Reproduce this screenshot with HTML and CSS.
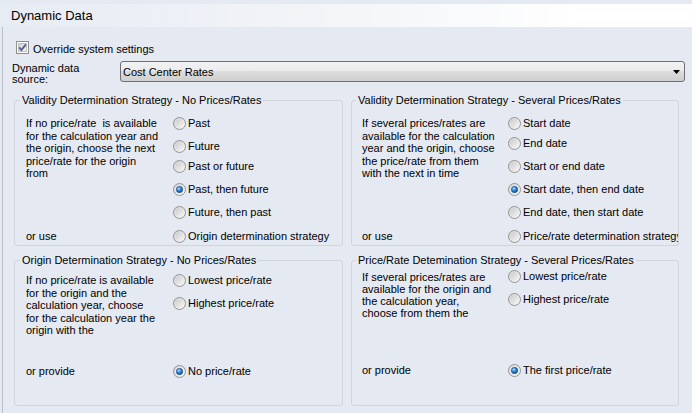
FILE: index.html
```html
<!DOCTYPE html>
<html lang="en">
<head>
<meta charset="utf-8">
<title>Dynamic Data</title>
<link rel="stylesheet" href="styles.css">
</head>
<body>
<svg class="defs" aria-hidden="true">
  <defs>
    <linearGradient id="g-ring" x1="0" y1="0" x2="1" y2="1">
      <stop offset="0" stop-color="#d2d2d2"/>
      <stop offset="1" stop-color="#fafafa"/>
    </linearGradient>
    <linearGradient id="g-inner" x1="0" y1="0" x2="1" y2="1">
      <stop offset="0" stop-color="#cbcbcb"/>
      <stop offset="1" stop-color="#f6f6f6"/>
    </linearGradient>
    <radialGradient id="g-dot" cx="0.4" cy="0.35" r="0.7">
      <stop offset="0" stop-color="#b4e0ff"/>
      <stop offset="0.45" stop-color="#2f88d6"/>
      <stop offset="1" stop-color="#0c4886"/>
    </radialGradient>
    <linearGradient id="g-check" x1="0" y1="0" x2="1" y2="1">
      <stop offset="0" stop-color="#cfcfcf"/>
      <stop offset="1" stop-color="#f7f7f7"/>
    </linearGradient>
    <symbol id="radio-off" viewBox="0 0 13 13">
      <circle cx="6.5" cy="6.5" r="6" fill="url(#g-ring)" stroke="#939393"/>
      <circle cx="6.5" cy="6.5" r="4.3" fill="url(#g-inner)"/>
    </symbol>
    <symbol id="radio-on" viewBox="0 0 13 13">
      <circle cx="6.5" cy="6.5" r="6" fill="url(#g-ring)" stroke="#939393"/>
      <circle cx="6.5" cy="6.5" r="4.3" fill="#f2f2f2"/>
      <circle cx="6.5" cy="6.5" r="3.2" fill="url(#g-dot)" stroke="#1f4a80" stroke-width="0.6"/>
    </symbol>
  </defs>
</svg>

<div class="window">
  <div class="titlebar">Dynamic Data</div>
  <div class="content">
    <div class="check-row">
      <svg class="checkbox" viewBox="0 0 13 13" width="13" height="13">
        <rect x="0.5" y="0.5" width="12" height="12" fill="#ffffff" stroke="#8e8f8f"/>
        <rect x="2.5" y="2.5" width="8" height="8" fill="url(#g-check)" stroke="#c2c2c2"/>
        <path d="M3.2 6.4 L5.4 9.1 L9.9 3.4" fill="none" stroke="#4b5c97" stroke-width="1.7"/>
      </svg>
      <span class="check-text">Override system settings</span>
    </div>

    <div class="source-row">
      <div class="source-label">Dynamic data<br>source:</div>
      <div class="combo">
        <span>Cost Center Rates</span>
        <svg class="combo-arrow" viewBox="0 0 7 4" width="7" height="4"><polygon points="0,0 7,0 3.5,4" fill="#000"/></svg>
      </div>
    </div>

    <div class="groups">
      <fieldset class="group tl">
        <legend>Validity Determination Strategy - No Prices/Rates</legend>
        <div class="group-body">
          <div class="desc">If no price/rate&nbsp; is available<br>for the calculation year and<br>the origin, choose the next<br>price/rate for the origin<br>from</div>
          <div class="radio"><svg><use href="#radio-off"/></svg><span>Past</span></div>
          <div class="radio"><svg><use href="#radio-off"/></svg><span>Future</span></div>
          <div class="radio"><svg><use href="#radio-off"/></svg><span>Past or future</span></div>
          <div class="radio"><svg><use href="#radio-on"/></svg><span>Past, then future</span></div>
          <div class="radio"><svg><use href="#radio-off"/></svg><span>Future, then past</span></div>
          <div class="radio"><svg><use href="#radio-off"/></svg><span>Origin determination strategy</span></div>
          <div class="alt">or use</div>
        </div>
      </fieldset>

      <fieldset class="group right tr">
        <legend>Validity Determination Strategy - Several Prices/Rates</legend>
        <div class="group-body">
          <div class="desc">If several prices/rates are<br>available for the calculation<br>year and the origin, choose<br>the price/rate from them<br>with the next in time</div>
          <div class="radio"><svg><use href="#radio-off"/></svg><span>Start date</span></div>
          <div class="radio"><svg><use href="#radio-off"/></svg><span>End date</span></div>
          <div class="radio"><svg><use href="#radio-off"/></svg><span>Start or end date</span></div>
          <div class="radio"><svg><use href="#radio-on"/></svg><span>Start date, then end date</span></div>
          <div class="radio"><svg><use href="#radio-off"/></svg><span>End date, then start date</span></div>
          <div class="radio"><svg><use href="#radio-off"/></svg><span>Price/rate determination strategy</span></div>
          <div class="alt">or use</div>
        </div>
      </fieldset>

      <fieldset class="group bl">
        <legend>Origin Determination Strategy - No Prices/Rates</legend>
        <div class="group-body">
          <div class="desc">If no price/rate is available<br>for the origin and the<br>calculation year, choose<br>for the calculation year the<br>origin with the</div>
          <div class="radio"><svg><use href="#radio-off"/></svg><span>Lowest price/rate</span></div>
          <div class="radio"><svg><use href="#radio-off"/></svg><span>Highest price/rate</span></div>
          <div class="radio"><svg><use href="#radio-on"/></svg><span>No price/rate</span></div>
          <div class="alt">or provide</div>
        </div>
      </fieldset>

      <fieldset class="group right br">
        <legend>Price/Rate Detemination Strategy - Several Prices/Rates</legend>
        <div class="group-body">
          <div class="desc">If several prices/rates are<br>available for the origin and<br>the calculation year,<br>choose from them the</div>
          <div class="radio"><svg><use href="#radio-off"/></svg><span>Lowest price/rate</span></div>
          <div class="radio"><svg><use href="#radio-off"/></svg><span>Highest price/rate</span></div>
          <div class="radio"><svg><use href="#radio-on"/></svg><span>The first price/rate</span></div>
          <div class="alt">or provide</div>
        </div>
      </fieldset>
    </div>
  </div>
</div>
</body>
</html>
```

FILE: styles.css
```css
html, body {
  margin: 0;
  padding: 0;
}

body {
  width: 692px;
  height: 413px;
  overflow: hidden;
  background: #e4e9f2;
  font-family: "Liberation Sans", Arial, sans-serif;
  font-size: 11px;
  color: #000;
}

.defs {
  display: block;
  width: 0;
  height: 0;
  overflow: hidden;
}

.window {
  padding-top: 4px;
}

.titlebar {
  height: 23px;
  line-height: 23px;
  font-size: 13px;
  padding-left: 11px;
  background: linear-gradient(to right, #e7ebf3 0%, #f2f4f8 45%, #ffffff 85%);
}

.content {
  height: 386px;
  box-sizing: border-box;
  margin-left: 2px;
  border-left: 1px solid #babfc8;
  padding: 14px 0 0 9px;
}

.check-row {
  display: flex;
  align-items: flex-start;
  gap: 4px;
  height: 13px;
  margin-left: 4px;
}

.checkbox {
  flex: none;
  display: block;
}

.check-text {
  line-height: 13px;
  margin-top: 2px;
  white-space: nowrap;
}

.source-row {
  display: flex;
  align-items: flex-start;
  margin-top: 7px;
}

.source-label {
  width: 108px;
  line-height: 11px;
  padding-top: 2px;
}

.combo {
  width: 565px;
  height: 21px;
  box-sizing: border-box;
  border: 1px solid #707070;
  border-radius: 3px;
  background: linear-gradient(#f2f2f2 0%, #ebebeb 50%, #dddddd 50%, #cfcfcf 100%);
  display: flex;
  align-items: center;
  justify-content: space-between;
  padding: 0 4px 0 2px;
}

.combo-arrow {
  display: block;
}

.groups {
  display: grid;
  grid-template-columns: 329px 328px;
  column-gap: 8px;
  row-gap: 8px;
  margin: 9px 0 0 2px;
}

.group {
  margin: 0;
  padding: 0;
  min-width: 0;
  border: 1px solid #d0d5dd;
  border-radius: 3px;
}

.group legend {
  padding: 0 2px;
  margin-left: 5px;
  line-height: 13px;
  white-space: nowrap;
}

.group.right legend {
  margin-left: 4px;
}

.group-body {
  display: grid;
  grid-template-columns: 147px 1fr;
  padding-left: 11px;
}

.group.right .group-body {
  grid-template-columns: 146px 170px;
  padding-left: 10px;
}

.desc {
  grid-column: 1;
  grid-row: 1 / -2;
  line-height: 12.5px;
  white-space: nowrap;
}

.alt {
  grid-column: 1;
  grid-row: -2;
  line-height: 13px;
}

.radio {
  grid-column: 2;
  display: flex;
  align-items: flex-start;
  gap: 2px;
  height: 13px;
  line-height: 13px;
  white-space: nowrap;
  overflow: hidden;
}

.radio svg {
  flex: none;
  display: block;
  width: 13px;
  height: 13px;
}

.tl .group-body {
  padding-top: 10px;
  padding-bottom: 2px;
  grid-template-rows: 23px 20px 23px 23px 24px 13px;
}

.tr .group-body {
  padding-top: 10px;
  padding-bottom: 2px;
  grid-template-rows: 20px 23px 23px 23px 24px 13px;
}

.bl .group-body {
  padding-top: 7px;
  padding-bottom: 27px;
  grid-template-rows: 23px 68px 13px;
}

.br .group-body {
  padding-top: 3px;
  padding-bottom: 28px;
  grid-template-rows: 23px 71px 13px;
}

.br .desc {
  margin-top: 1px;
  line-height: 12px;
}
```
